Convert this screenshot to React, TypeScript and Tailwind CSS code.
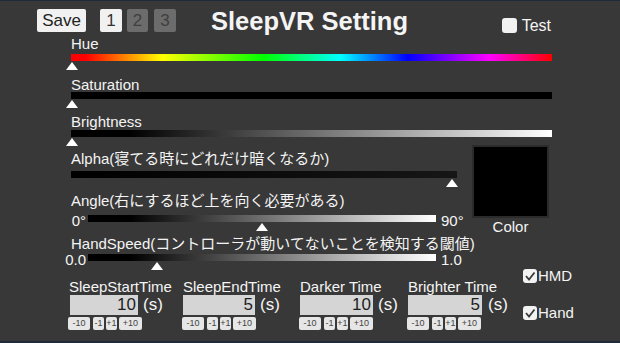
import React from 'react';

const FONT = '"Liberation Sans", "Noto Sans CJK JP", Arial, sans-serif';

// slider thumb that hangs under a bar
const Thumb = ({ x }: { x: number }) => (
  <div
    className="absolute top-[8px] w-0 h-0 -translate-x-1/2 border-l-[6px] border-r-[6px] border-b-[8px] border-l-transparent border-r-transparent border-b-white"
    style={{ left: x }}
  />
);

const Bar = ({ width, bg, thumb, className = '' }: { width: number; bg: string; thumb: number; className?: string }) => (
  <div className={`relative h-[7px] ${className}`} style={{ width, background: bg }}>
    <Thumb x={thumb} />
  </div>
);

const StepButtons = () => (
  <div className="flex mt-[2px] h-[13px] text-[9px] leading-[13px] text-[#444]">
    <div className="w-[22px] bg-[#e6e6e6] rounded-[2px] text-center">-10</div>
    <div className="w-[11px] ml-[3px] bg-[#e6e6e6] rounded-[2px] text-center">-1</div>
    <div className="w-[11px] ml-[2px] bg-[#e6e6e6] rounded-[2px] text-center">+1</div>
    <div className="w-[23px] ml-[2px] bg-[#e6e6e6] rounded-[2px] text-center">+10</div>
  </div>
);

interface TimeFieldProps {
  label: string;
  value: number;
  inputWidth: number;
  inputOffset: number;
  unitGap: number;
  width: number;
}

const TimeField = ({ label, value, inputWidth, inputOffset, unitGap, width }: TimeFieldProps) => (
  <div className="flex flex-col mt-[12px]" style={{ width }}>
    <div className="ml-[1px] text-[15px] leading-[15px] whitespace-nowrap">{label}</div>
    <div className="flex items-center mt-[1px]">
      <div
        className="h-[20px] bg-[#d5d5d5] text-[#1e1e1e] text-[17px] leading-[20px] text-right pr-[2px]"
        style={{ width: inputWidth, marginLeft: inputOffset }}
      >
        {value}
      </div>
      <div className="text-[17px] leading-[20px]" style={{ marginLeft: unitGap }}>(s)</div>
    </div>
    <StepButtons />
  </div>
);

const CheckMark = () => (
  <svg width="14" height="14" viewBox="0 0 14 14">
    <polyline points="3,7 6,10.5 11.5,3.5" fill="none" stroke="#3a3a3a" strokeWidth="1.8" />
  </svg>
);

const Toggle = ({ label, className = '' }: { label: string; className?: string }) => (
  <div className={`flex items-center ${className}`}>
    <div className="w-[14px] h-[14px] rounded-[3px] bg-[#f2f2f2]">
      <CheckMark />
    </div>
    <div className="ml-[1px] text-[15px] leading-[15px]">{label}</div>
  </div>
);

export default function App() {
  const hue = 'linear-gradient(to right, #ff0000 0%, #ff0000 3%, #ffff00 19%, #00ff00 40%, #00ffff 56%, #0000ff 70%, #ff00ff 87%, #ff0000 100%)';
  const bw = 'linear-gradient(to right, #000000 0%, #000000 12%, #ffffff 100%)';
  const dark = 'linear-gradient(to right, #000000 0%, #161616 100%)';

  return (
    <div
      className="w-[620px] h-[343px] bg-[#383838] border-t border-b-2 border-[#1e2a3b] text-[#f4f4f4] flex flex-col overflow-hidden"
      style={{ fontFamily: FONT }}
    >
      {/* header */}
      <div className="flex items-start h-[35px] pt-[8px] pl-[37px]">
        <div className="w-[49px] h-[23px] bg-[#f1f1f1] rounded-[2px] text-[17px] leading-[23px] text-[#222] text-center">Save</div>
        <div className="ml-[14px] w-[22px] h-[23px] bg-[#f1f1f1] rounded-[2px] text-[17px] leading-[23px] text-[#333] text-center">1</div>
        <div className="ml-[5px] w-[21px] h-[23px] bg-[#6c6c6c] rounded-[2px] text-[17px] leading-[23px] text-[#3f3f3f] text-center">2</div>
        <div className="ml-[6px] w-[22px] h-[23px] bg-[#6c6c6c] rounded-[2px] text-[17px] leading-[23px] text-[#3f3f3f] text-center">3</div>
        <div className="ml-[35px] font-bold text-[25.5px] leading-[25px] whitespace-nowrap">SleepVR Setting</div>
        <div className="ml-auto mr-[69px] mt-[9px] flex items-center">
          <div className="w-[15px] h-[15px] rounded-[3px] bg-[#f2f2f2]" />
          <div className="ml-[5px] text-[16px] leading-[15px]">Test</div>
        </div>
      </div>

      {/* colour sliders */}
      <div className="flex flex-col pl-[71px]">
        <div className="text-[15px] leading-[15px]">Hue</div>
        <Bar width={481} bg={hue} thumb={1} className="mt-[3px]" />

        <div className="mt-[16px] text-[15px] leading-[15px]">Saturation</div>
        <Bar width={481} bg="#000000" thumb={1} />

        <div className="mt-[15px] text-[15px] leading-[15px]">Brightness</div>
        <Bar width={481} bg={bw} thumb={1} className="mt-[1px]" />

        <div className="flex">
          <div className="w-[401px] flex flex-col">
            <div className="mt-[14px] text-[15px] leading-[15px] whitespace-nowrap">Alpha(寝てる時にどれだけ暗くなるか)</div>
            <Bar width={386} bg={dark} thumb={381} className="mt-[5px]" />

            <div className="mt-[15px] text-[15px] leading-[15px] whitespace-nowrap">Angle(右にするほど上を向く必要がある)</div>
            <div className="flex items-start mt-[5px] h-[15px]">
              <div className="-ml-[7px] w-[24px] pr-[2px] text-right text-[15px] leading-[15px]">0°</div>
              <Bar width={348} bg={bw} thumb={174} className="mt-[2px]" />
              <div className="ml-[5px] text-[15px] leading-[15px]">90°</div>
            </div>

            <div className="mt-[8px] text-[15px] leading-[15px] whitespace-nowrap">HandSpeed(コントローラが動いてないことを検知する閾値)</div>
            <div className="flex items-start mt-[1px] h-[15px]">
              <div className="-ml-[7px] w-[24px] pr-[2px] text-right text-[15px] leading-[15px]">0.0</div>
              <Bar width={348} bg={bw} thumb={69} className="mt-[2px]" />
              <div className="ml-[5px] text-[15px] leading-[15px]">1.0</div>
            </div>
          </div>

          <div className="flex flex-col">
            <div className="mt-[8px] w-[77px] h-[73px] bg-black border-2 border-[#2b2b2b]" />
            <div className="mt-[1px] w-[77px] text-center text-[15px] leading-[15px]">Color</div>
          </div>
        </div>
      </div>

      {/* timers */}
      <div className="flex pl-[68px]">
        <TimeField label="SleepStartTime" value={10} inputWidth={68} inputOffset={2} unitGap={5} width={114} />
        <TimeField label="SleepEndTime" value={5} inputWidth={72} inputOffset={1} unitGap={5} width={117} />
        <TimeField label="Darker Time" value={10} inputWidth={73} inputOffset={1} unitGap={5} width={108} />
        <TimeField label="Brighter Time" value={5} inputWidth={74} inputOffset={1} unitGap={6} width={116} />
        <div className="flex flex-col mt-[1px]">
          <Toggle label="HMD" />
          <Toggle label="Hand" className="mt-[22px]" />
        </div>
      </div>
    </div>
  );
}
